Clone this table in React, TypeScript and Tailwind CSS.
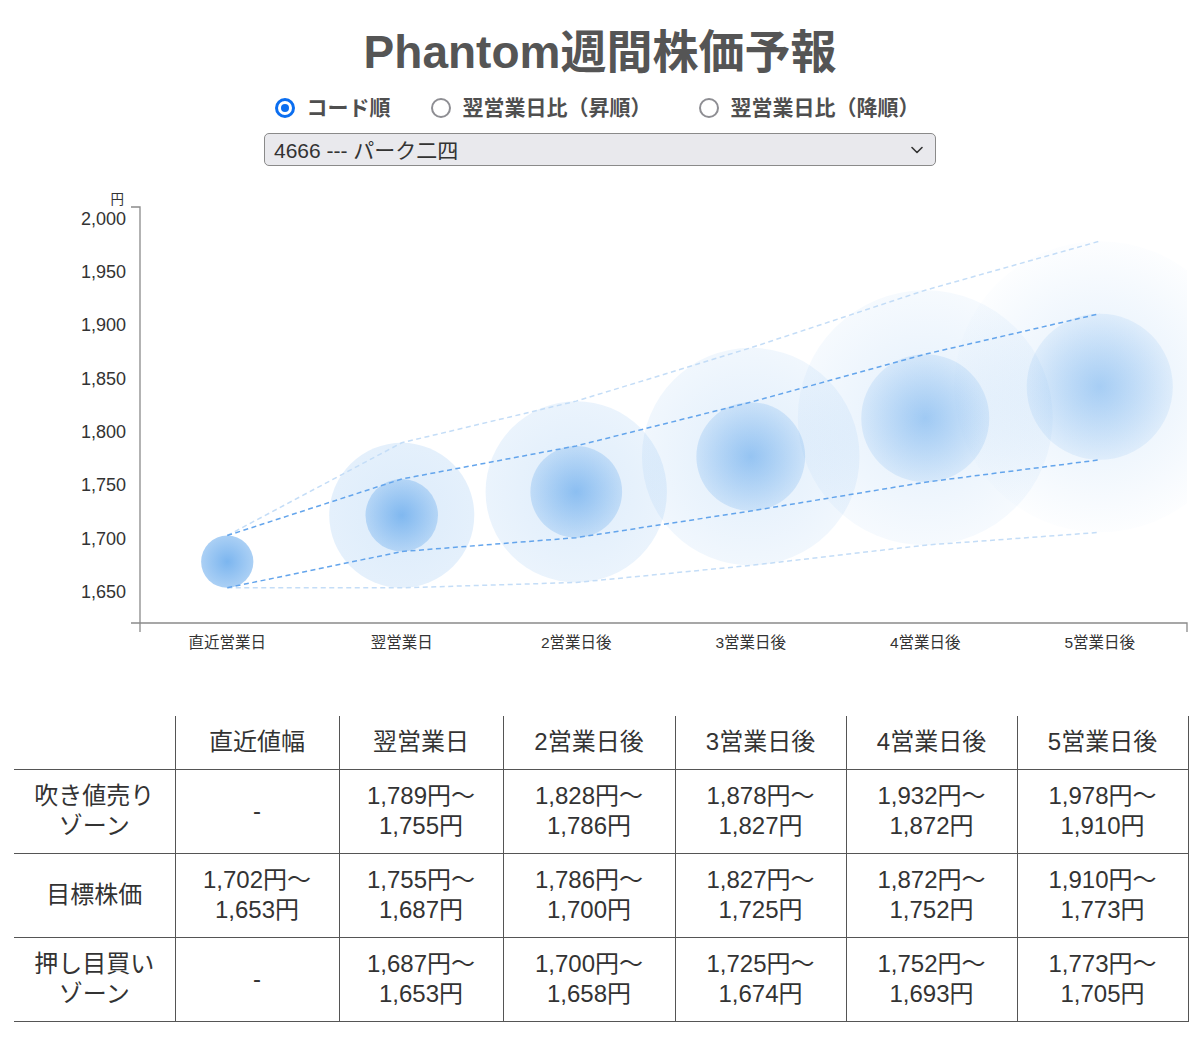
import * as React from "react";

const Y_TOP = 207;
const Y_BOTTOM = 623;
const MIN = 1620;
const MAX = 2010;
const X_LEFT = 140;
const X_RIGHT = 1187;
const BAND = (X_RIGHT - X_LEFT) / 6;

const yOf = (v: number) => Y_BOTTOM - ((v - MIN) * (Y_BOTTOM - Y_TOP)) / (MAX - MIN);
const xOf = (i: number) => X_LEFT + BAND * (i + 0.5);

type Range = [number, number] | null;

type Day = {
  label: string;
  head: string;
  sell: Range;
  target: [number, number];
  buy: Range;
};

const days: Day[] = [
  { label: "直近営業日", head: "直近値幅", sell: null, target: [1702, 1653], buy: null },
  { label: "翌営業日", head: "翌営業日", sell: [1789, 1755], target: [1755, 1687], buy: [1687, 1653] },
  { label: "2営業日後", head: "2営業日後", sell: [1828, 1786], target: [1786, 1700], buy: [1700, 1658] },
  { label: "3営業日後", head: "3営業日後", sell: [1878, 1827], target: [1827, 1725], buy: [1725, 1674] },
  { label: "4営業日後", head: "4営業日後", sell: [1932, 1872], target: [1872, 1752], buy: [1752, 1693] },
  { label: "5営業日後", head: "5営業日後", sell: [1978, 1910], target: [1910, 1773], buy: [1773, 1705] },
];

// opacity of the gradient stops (center, edge), per day
const innerAlpha = [
  [0.64, 0.41],
  [0.54, 0.25],
  [0.48, 0.2],
  [0.43, 0.16],
  [0.38, 0.12],
  [0.34, 0.09],
];
const outerAlpha = [
  [0, 0],
  [0.17, 0.13],
  [0.16, 0.1],
  [0.15, 0.07],
  [0.14, 0.045],
  [0.14, 0.012],
];

const BLUE = "rgb(50,140,230)";

function fmt(v: number) {
  return v.toLocaleString("en-US");
}

function Chart() {
  const outerTop = days.map((d) => (d.sell ? d.sell[0] : d.target[0]));
  const outerBottom = days.map((d) => (d.buy ? d.buy[1] : d.target[1]));
  const innerTop = days.map((d) => d.target[0]);
  const innerBottom = days.map((d) => d.target[1]);

  const points = (vals: number[]) => vals.map((v, i) => `${xOf(i)},${yOf(v)}`).join(" ");

  return (
    <svg width={1200} height={470} viewBox="0 190 1200 470" className="block">
      <defs>
        <clipPath id="plot-area">
          <rect x={X_LEFT} y={Y_TOP} width={X_RIGHT - X_LEFT} height={Y_BOTTOM - Y_TOP} />
        </clipPath>
        {days.map((_, i) => (
          <React.Fragment key={`grad_${i}`}>
            <radialGradient id={`inner_${i}`}>
              <stop offset="0%" stopColor={BLUE} stopOpacity={innerAlpha[i][0]} />
              <stop offset="100%" stopColor={BLUE} stopOpacity={innerAlpha[i][1]} />
            </radialGradient>
            <radialGradient id={`outer_${i}`}>
              <stop offset="0%" stopColor={BLUE} stopOpacity={outerAlpha[i][0]} />
              <stop offset="100%" stopColor={BLUE} stopOpacity={outerAlpha[i][1]} />
            </radialGradient>
          </React.Fragment>
        ))}
      </defs>

      <g clipPath="url(#plot-area)">
        {days.map((d, i) => {
          if (!d.sell || !d.buy) return null;
          const top = yOf(d.sell[0]);
          const bottom = yOf(d.buy[1]);
          return (
            <circle
              key={`outer_${i}`}
              cx={xOf(i)}
              cy={(top + bottom) / 2}
              r={(bottom - top) / 2}
              fill={`url(#outer_${i})`}
            />
          );
        })}
        {days.map((d, i) => {
          const top = yOf(d.target[0]);
          const bottom = yOf(d.target[1]);
          return (
            <circle
              key={`inner_${i}`}
              cx={xOf(i)}
              cy={(top + bottom) / 2}
              r={(bottom - top) / 2}
              fill={`url(#inner_${i})`}
            />
          );
        })}
      </g>

      <polyline points={points(outerTop)} fill="none" stroke="#c4ddf7" strokeWidth={1.5} strokeDasharray="5 3.5" />
      <polyline points={points(outerBottom)} fill="none" stroke="#c4ddf7" strokeWidth={1.5} strokeDasharray="5 3.5" />
      <polyline points={points(innerTop)} fill="none" stroke="#64a5ec" strokeWidth={1.5} strokeDasharray="5 3.5" />
      <polyline points={points(innerBottom)} fill="none" stroke="#64a5ec" strokeWidth={1.5} strokeDasharray="5 3.5" />

      <path
        d={`M131,${Y_TOP} H${X_LEFT} V${Y_BOTTOM} M131,${Y_BOTTOM} H${X_RIGHT} V632 M${X_LEFT},${Y_BOTTOM} V632`}
        fill="none"
        stroke="#8a8a8a"
        strokeWidth={1.3}
      />

      <text x={124} y={199} textAnchor="end" dominantBaseline="central" fontSize={13.5} fill="#333">
        円
      </text>
      {[1650, 1700, 1750, 1800, 1850, 1900, 1950, 2000].map((v) => (
        <text
          key={`ytick_${v}`}
          x={126}
          y={yOf(v) + 1}
          textAnchor="end"
          dominantBaseline="central"
          fontSize={18}
          fill="#333"
        >
          {fmt(v)}
        </text>
      ))}
      {days.map((d, i) => (
        <text
          key={`xtick_${i}`}
          x={xOf(i)}
          y={642}
          textAnchor="middle"
          dominantBaseline="central"
          fontSize={15.5}
          fill="#333"
        >
          {d.label}
        </text>
      ))}
    </svg>
  );
}

function Radio(props: { checked: boolean; label: string; className: string }) {
  return (
    <label className={`flex items-center gap-[12px] ${props.className}`}>
      {props.checked ? (
        <span className="flex h-[20px] w-[20px] items-center justify-center rounded-full border-[3px] border-[#0b6ef0] bg-white">
          <span className="h-[8px] w-[8px] rounded-full bg-[#0b6ef0]" />
        </span>
      ) : (
        <span className="h-[20px] w-[20px] rounded-full border-2 border-[#8e8e93] bg-white" />
      )}
      <span className="text-[21px] font-bold leading-[28px] text-[#4f4f4f]">{props.label}</span>
    </label>
  );
}

function rangeText(r: Range) {
  if (!r) return "-";
  return (
    <>
      {fmt(r[0])}円〜
      <br />
      {fmt(r[1])}円
    </>
  );
}

function ForecastTable() {
  const rows: { name: React.ReactNode; cells: Range[] }[] = [
    {
      name: (
        <>
          吹き値売り
          <br />
          ゾーン
        </>
      ),
      cells: days.map((d) => d.sell),
    },
    { name: "目標株価", cells: days.map((d) => d.target) },
    {
      name: (
        <>
          押し目買い
          <br />
          ゾーン
        </>
      ),
      cells: days.map((d) => d.buy),
    },
  ];

  return (
    <table className="ml-[14px] w-[1174px] table-fixed border-collapse text-center text-[24px] leading-[30px] text-[#333]">
      <colgroup>
        <col className="w-[161px]" />
        <col className="w-[164px]" />
        <col className="w-[164px]" />
        <col className="w-[172px]" />
        <col className="w-[171px]" />
        <col className="w-[171px]" />
        <col className="w-[171px]" />
      </colgroup>
      <thead>
        <tr className="h-[53px]">
          <th className="border-b border-[#555] font-normal" />
          {days.map((d, i) => (
            <th key={`head_${i}`} className="border-x border-b border-[#555] font-normal">
              {d.head}
            </th>
          ))}
        </tr>
      </thead>
      <tbody>
        {rows.map((row, r) => (
          <tr key={`row_${r}`} className="h-[84px]">
            <td className="border-b border-[#555]">{row.name}</td>
            {row.cells.map((c, i) => (
              <td key={`cell_${r}_${i}`} className="border-x border-b border-[#555]">
                {rangeText(c)}
              </td>
            ))}
          </tr>
        ))}
      </tbody>
    </table>
  );
}

export default function App() {
  return (
    <div className="min-h-[1044px] w-[1200px] bg-white font-['Liberation_Sans','Noto_Sans_CJK_JP',sans-serif]">
      <h1 className="pt-[24px] text-center text-[46px] font-bold leading-[56px] text-[#555]">
        Phantom週間株価予報
      </h1>
      <div className="mt-[14px] flex h-[28px] items-center justify-center pr-[6px]">
        <Radio checked label="コード順" className="" />
        <Radio checked={false} label="翌営業日比（昇順）" className="ml-[40px]" />
        <Radio checked={false} label="翌営業日比（降順）" className="ml-[47px]" />
      </div>
      <div className="mt-[11px] flex justify-center">
        <div className="flex h-[33px] w-[672px] items-center justify-between rounded-[5px] border border-[#8a8a8a] bg-[#e9e9ed] pl-[9px] pr-[12px] text-[21px] leading-[33px] text-[#333]">
          <span className="pt-[2px]">4666 --- パーク二四</span>
          <svg width="12" height="8" viewBox="0 0 12 8" fill="none">
            <path d="M1 1.5 L6 6.5 L11 1.5" stroke="#333" strokeWidth="1.6" strokeLinecap="round" strokeLinejoin="round" />
          </svg>
        </div>
      </div>
      <div className="mt-[24px]">
        <Chart />
      </div>
      <div className="mt-[56px]">
        <ForecastTable />
      </div>
    </div>
  );
}
